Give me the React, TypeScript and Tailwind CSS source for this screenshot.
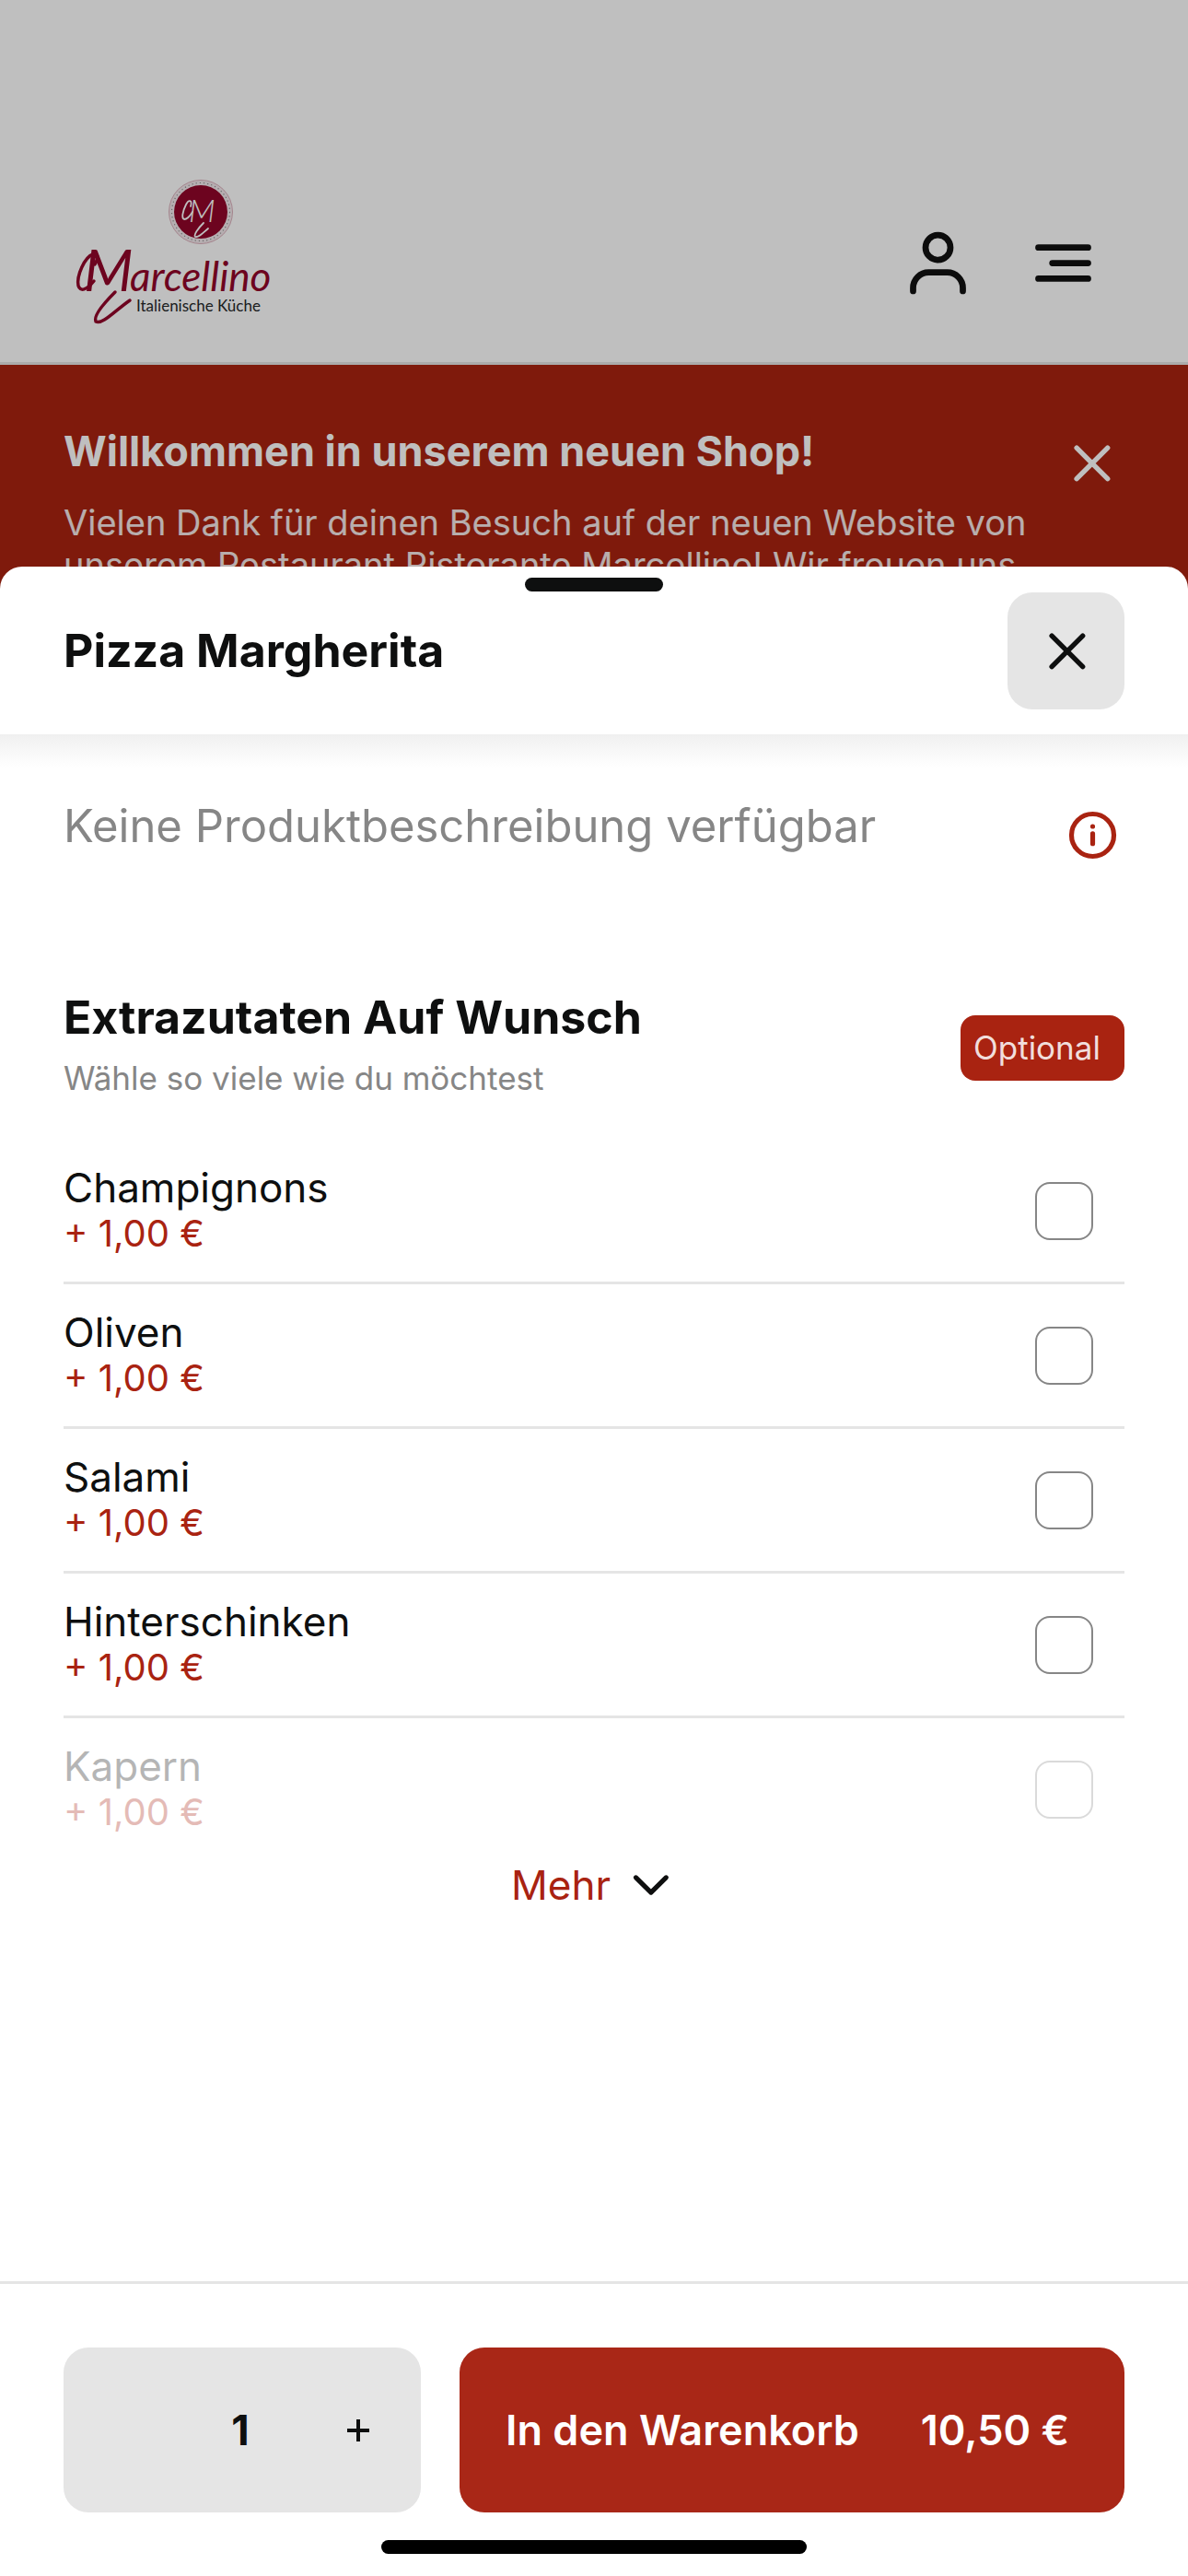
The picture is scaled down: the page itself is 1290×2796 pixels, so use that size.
import { useState } from "react";
import type { ReactNode } from "react";

type Extra = { id: string; name: string; price: string }

const extras: Extra[] = [
    { id: "champignons", name: "Champignons", price: "+ 1,00 €" },
    { id: "oliven", name: "Oliven", price: "+ 1,00 €" },
    { id: "salami", name: "Salami", price: "+ 1,00 €" },
    { id: "hinterschinken", name: "Hinterschinken", price: "+ 1,00 €" },
    { id: "kapern", name: "Kapern", price: "+ 1,00 €" },
]

function Icon({ className, width = 2, children }: { className: string; width?: number; children: ReactNode }) {
    return (
        <svg
            viewBox="0 0 24 24" className={className} fill="none" stroke="currentColor"
            strokeWidth={width} strokeLinecap="round" strokeLinejoin="round" aria-hidden="true"
        >
            {children}
        </svg>
    )
}

function CloseIcon() {
    return (
        <Icon className="size-[72px]" width={1.8}>
            <path d="M6.7 6.7 17.9 17.9M17.9 6.7 6.7 17.9" />
        </Icon>
    )
}

function Logo() {
    return (
        <svg viewBox="0 0 240 180" className="w-[240px] h-[180px]" role="img" aria-label="Marcellino Italienische Küche">
            {/* Seal with the monogram */}
            <circle cx="149" cy="35" r="34.5" fill="#f3e9ec" stroke="#dcb0bc" strokeWidth="1" />
            <circle cx="149" cy="35" r="31.5" fill="none" stroke="#8b8b8b" strokeWidth="1.2" strokeDasharray="1.2 3" />
            <circle cx="149" cy="35" r="29" fill="#92062a" />
            <path d="M138 29c2-7-2-8-5-2-4 8-5 15-2 16 3 0 6-3 9-8M152 47c-6 6-11 13-9 15 4 1 8-4 14-9" fill="none" stroke="#ffffff" strokeWidth="1.8" strokeLinecap="round" />
            <text x="136" y="46" fontFamily="Lato" fontStyle="italic" fontWeight="300" fontSize="34" fill="#ffffff">M</text>
            {/* Wordmark and its flourishes */}
            <g fill="none" stroke="#92062a" strokeLinecap="round" strokeLinejoin="round">
                <path strokeWidth="3.5" d="M34 92c4-7 4-13-2-11C23 84 14 104 16 115c2 7 9 5 17-5" />
                <path strokeWidth="3.5" d="M56 122c-12 12-24 26-21 32 7 4 21-12 37-23" />
            </g>
            <g fontFamily="Lato" fontStyle="italic" fill="#92062a">
                <text x="22" y="121" fontSize="62">M</text>
                <text x="72" y="121" fontSize="44">arcellino</text>
            </g>
            <text x="79" y="143" fontFamily="Lato" fontSize="17" fill="#26282a">Italienische Küche</text>
        </svg>
    )
}

function ShopHeader() {
    return (
        <header className="bg-white pt-[177px] border-b-3 border-[#e5e5e5]">
            <div className="h-[216px] pl-[69px] pr-[95px] flex items-center justify-between text-[#111111]">
                <a href="#start"><Logo /></a>
                <nav className="flex items-center gap-[55px]">
                    <button type="button" aria-label="Konto">
                        <Icon className="size-[81px]">
                            <circle cx="12" cy="7" r="4" />
                            <path d="M4 21v-1a5 5 0 0 1 5-5h6a5 5 0 0 1 5 5v1" />
                        </Icon>
                    </button>
                    <button type="button" aria-label="Menü">
                        <Icon className="size-[81px]">
                            <path d="M4 7h16M8.5 12H20M4 17h16" />
                        </Icon>
                    </button>
                </nav>
            </div>
        </header>
    )
}

function WelcomeBanner() {
    return (
        <section className="bg-[#aa2310] text-white px-[69px] pt-16 pb-12 flex justify-between items-start">
            <div className="max-w-[1060px]">
                <h2 className="text-[45px] leading-[60px] font-bold">Willkommen in unserem neuen Shop!</h2>
                <p className="mt-6 text-[38px] leading-[46px] text-white/90">
                    Vielen Dank für deinen Besuch auf der neuen Website von unserem Restaurant Ristorante Marcellino! Wir freuen uns
                </p>
            </div>
            <button type="button" aria-label="Hinweis schließen" className="mt-1.5">
                <CloseIcon />
            </button>
        </section>
    )
}

function ExtraRow({ extra, faded, checked, onToggle }: { extra: Extra; faded: boolean; checked: boolean; onToggle: () => void }) {
    return (
        <li className={faded ? "opacity-30" : "border-b-3 border-[#e5e5e5]"}>
            <label htmlFor={extra.id} className="h-[154px] pr-[34px] flex items-center justify-between">
                <span className="flex flex-col">
                    <span className="text-[44px] leading-[50px]">{extra.name}</span>
                    <span className="text-[40px] leading-[50px] text-[#a92311]">{extra.price}</span>
                </span>
                <input
                    type="checkbox" id={extra.id} checked={checked} onChange={onToggle}
                    className="appearance-none size-[63px] rounded-2xl border-2 border-[#868686] checked:bg-[#a92311]"
                />
            </label>
        </li>
    )
}

export default function App() {
    const [selected, setSelected] = useState<string[]>([])
    const [amount, setAmount] = useState<number>(1)

    const toggleExtra = (id: string) => {
        if(selected.includes(id)){
            setSelected(selected.filter((s) => s !== id))
            return
        }
        setSelected([...selected, id])
    }

    return (
        <div className="min-h-screen bg-white font-['Inter',sans-serif] text-[#0e0f0f]">
            <ShopHeader />
            <WelcomeBanner />

            {/* Product sheet over the dimmed shop */}
            <div className="fixed inset-0 bg-black/25 pt-[615px] flex flex-col">
                <div role="dialog" aria-labelledby="product-title" className="relative flex-1 bg-white rounded-t-3xl flex flex-col">
                    <div className="absolute top-3 left-1/2 -translate-x-1/2 w-[150px] h-[15px] rounded-full bg-[#0e0f0f]" />
                    <header className="h-[182px] px-[69px] flex items-center justify-between">
                        <h1 id="product-title" className="text-[50px] leading-[60px] font-bold">Pizza Margherita</h1>
                        <button type="button" aria-label="Schließen" className="size-[127px] rounded-[27px] bg-[#e5e5e5] flex items-center justify-center">
                            <CloseIcon />
                        </button>
                    </header>

                    <main className="flex-1 px-[69px] bg-linear-to-b from-[#f0f0f0] to-white to-[36px]">
                        <div className="pt-[75px] flex items-start justify-between">
                            <p className="text-[49px] leading-[50px] text-[#868686]">Keine Produktbeschreibung verfügbar</p>
                            <button type="button" aria-label="Produktinformationen" className="text-[#a92311]">
                                <Icon className="size-[69px]" width={1.8}>
                                    <circle cx="12" cy="12" r="8" />
                                    <path d="M12 11.4v3.8" />
                                    <circle cx="12" cy="8.7" r="0.9" fill="currentColor" stroke="none" />
                                </Icon>
                            </button>
                        </div>

                        <div className="mt-[138px] flex items-center justify-between">
                            <div>
                                <h2 className="text-[50px] leading-[50px] font-bold">Extrazutaten Auf Wunsch</h2>
                                <p className="mt-4 text-[35px] leading-[50px] text-[#868686]">Wähle so viele wie du möchtest</p>
                            </div>
                            <span className="w-[178px] h-[71px] pl-[14px] rounded-2xl bg-[#a92311] flex items-center text-[35px] text-[#f1dedc]">
                                Optional
                            </span>
                        </div>

                        <ul className="mt-[42px]">
                            {extras.map((extra, i) => (
                                <ExtraRow
                                    key={extra.id} extra={extra} faded={i === extras.length - 1}
                                    checked={selected.includes(extra.id)} onToggle={() => toggleExtra(extra.id)}
                                />
                            ))}
                        </ul>
                        <button type="button" className="mx-auto flex items-center gap-[18px] text-[44px] leading-[54px] text-[#a92311]">
                            Mehr
                            <Icon className="size-[54px] text-[#0e0f0f]" width={2.3}>
                                <path d="m4.2 8.4 7.3 7.2 7.3-7.2" />
                            </Icon>
                        </button>
                    </main>

                    <footer className="border-t-3 border-[#e5e5e5] pt-[69px] pb-6 px-[69px]">
                        <div className="flex gap-[42px]">
                            <div className="w-[388px] h-[179px] pr-1 rounded-[27px] bg-[#e5e5e5] grid grid-cols-3 items-stretch text-[45px]">
                                <button type="button" aria-label="Weniger" disabled={amount === 1} onClick={() => setAmount(amount - 1)}>
                                    {amount > 1 && "−"}
                                </button>
                                <output className="flex items-center justify-center font-bold">{amount}</output>
                                <button type="button" aria-label="Mehr davon" onClick={() => setAmount(amount + 1)} className="flex items-center justify-center">
                                    <svg viewBox="0 0 24 24" className="size-6" stroke="currentColor" strokeWidth="4" aria-hidden="true">
                                        <path d="M0 12h24M12 0v24" />
                                    </svg>
                                </button>
                            </div>
                            <button type="button" className="flex-1 h-[179px] pl-[50px] pr-[60px] rounded-[27px] bg-[#a92717] text-white text-[45px] font-semibold flex items-center justify-between">
                                <span>In den Warenkorb</span>
                                <span>10,50 €</span>
                            </button>
                        </div>
                        <div className="mt-[30px] mx-auto w-[462px] h-[15px] rounded-full bg-black" />
                    </footer>
                </div>
            </div>
        </div>
    )
}
